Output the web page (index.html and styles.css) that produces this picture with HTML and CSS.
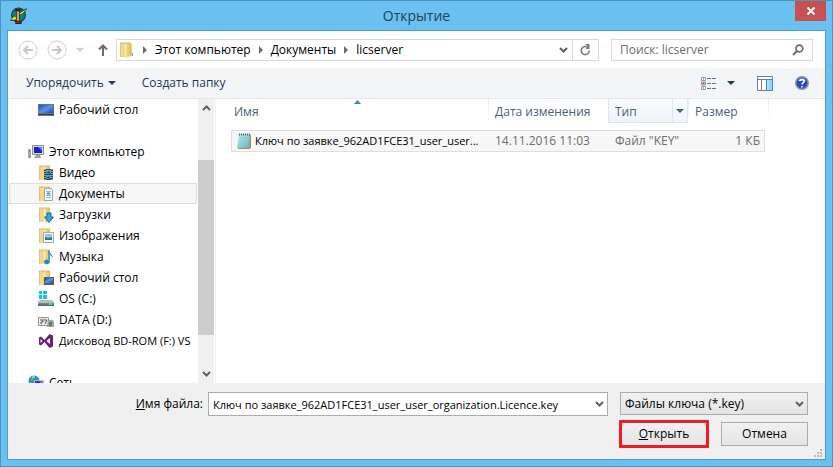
FILE: index.html
```html
<!DOCTYPE html>
<html lang="ru">
<head>
<meta charset="utf-8">
<title>Открытие</title>
<link rel="stylesheet" href="styles.css">
</head>
<body>
<svg class="defs" aria-hidden="true">
  <defs>
    <linearGradient id="gold" x1="0" x2="1"><stop offset="0" stop-color="#f7e39c"/><stop offset="1" stop-color="#dfbc58"/></linearGradient>
    <linearGradient id="screen" x1="0" y1="0" x2="1" y2="1"><stop offset="0" stop-color="#1d4fae"/><stop offset=".5" stop-color="#5c94ea"/><stop offset="1" stop-color="#1c49ad"/></linearGradient>
    <linearGradient id="pad" x1="0" x2="1" y2="1"><stop offset="0" stop-color="#c9eef5"/><stop offset="1" stop-color="#5fb0c6"/></linearGradient>
    <linearGradient id="metal" x2="0" y2="1"><stop offset="0" stop-color="#b9c0c4"/><stop offset="1" stop-color="#4c6068"/></linearGradient>
    <symbol id="folder" viewBox="0 0 16 16">
      <path d="M1 1h6v14H1z" fill="#f0d98c"/>
      <path d="M1.500 1v14" stroke="#dcc47c"/>
      <path d="M6 1h6v13l-5 2z" fill="url(#gold)"/>
      <path d="M6.500 2v13" stroke="#fff3c4"/>
      <path d="M1 1h11" stroke="#d9bc68"/>
    </symbol>
    <symbol id="chevron" viewBox="0 0 9 6"><path d="M1 1l3.500 3.500L8 1" fill="none" stroke="currentColor" stroke-width="2"/></symbol>
    <symbol id="caret" viewBox="0 0 8 4"><path d="M0 0h8L4 4z" fill="currentColor"/></symbol>
    <symbol id="step" viewBox="0 0 4 8"><path d="M0 0l4 4-4 4z" fill="currentColor"/></symbol>
  </defs>
</svg>
<div class="window">
  <header class="titlebar">
    <svg class="app-icon" viewBox="0 0 16 16" aria-hidden="true">
      <circle cx="8" cy="7.500" r="6.500" fill="#087f83" stroke="#123c3c"/>
      <path d="M0 13l3-4 3 1-1 3zM9 6l3-3 4-2-2 4-4 2z" fill="#222"/>
      <path d="M1 12l3-3 2 1-1 2zM9 6l3-2 3-2-2 3-3 2z" fill="#f4ee10"/>
      <path d="M5 2h5v2H9v9h2v3H5v-3h1V4H5z" fill="#3b1710"/>
      <path d="M7.500 4v9" stroke="#e1a052" stroke-width="2"/><path d="M6 14.500h4" stroke="#b52a20"/>
    </svg>
    <h1>Открытие</h1>
    <button class="close" aria-label="Закрыть"><svg width="8" height="8" viewBox="0 0 8 8"><path d="M.5 .5l7 7M7.500 .5l-7 7" stroke="#fff" stroke-width="2"/></svg></button>
  </header>
  <main class="dialog">
    <nav class="navbar">
      <button class="round" aria-label="Назад"><svg width="20" height="20" viewBox="0 0 20 20"><circle cx="10" cy="10" r="9" fill="none" stroke="#cdcdcd"/><path d="M15 10H6M10 6l-4 4 4 4" fill="none" stroke="#c8c8c8" stroke-width="2"/></svg></button>
      <button class="round" aria-label="Вперёд"><svg width="20" height="20" viewBox="0 0 20 20"><circle cx="10" cy="10" r="9" fill="none" stroke="#cdcdcd"/><path d="M5 10h9M10 6l4 4-4 4" fill="none" stroke="#c8c8c8" stroke-width="2"/></svg></button>
      <button class="recent" aria-label="Последние расположения"><svg width="8" height="4"><use href="#caret"/></svg></button>
      <button class="up" aria-label="Вверх"><svg width="10" height="12" viewBox="0 0 10 12"><path d="M5 12V2M1 5.500l4-4 4 4" fill="none" stroke="#6b6b6b" stroke-width="2"/></svg></button>
      <div class="address">
        <svg class="place" width="16" height="16" viewBox="0 0 16 16"><use href="#folder"/><path d="M12.500 2v12" stroke="#e8cd77"/><path d="M13.500 11v3" stroke="#69abd0"/></svg>
        <svg class="step" width="4" height="8"><use href="#step"/></svg>
        <a href="#">Этот компьютер</a>
        <svg class="step" width="4" height="8"><use href="#step"/></svg>
        <a href="#">Документы</a>
        <svg class="step" width="4" height="8"><use href="#step"/></svg>
        <a href="#">licserver</a>
        <button class="history" aria-label="Предыдущие расположения"><svg width="9" height="6"><use href="#chevron"/></svg></button>
        <button class="refresh" aria-label="Обновить"><svg width="11" height="12" viewBox="0 0 11 12"><path d="M6.500 2.800A4 4 0 1 0 9.200 6.500" fill="none" stroke="#7b7b7b" stroke-width="1.600"/><path d="M5.500 0v1.500h2L5.500 5h4V0z" fill="#7b7b7b"/></svg></button>
      </div>
      <div class="search">
        <input type="search" aria-label="Поиск" placeholder="Поиск: licserver">
        <svg width="12" height="12" viewBox="0 0 12 12"><circle cx="7.300" cy="4.500" r="3.400" fill="none" stroke="#6d6d6d" stroke-width="1.700"/><path d="M5 7l-4 4" stroke="#6d6d6d" stroke-width="2"/></svg>
      </div>
    </nav>
    <div class="toolbar">
      <button>Упорядочить<svg width="8" height="4"><use href="#caret"/></svg></button>
      <button>Создать папку</button>
      <span class="spacer"></span>
      <button class="view" aria-label="Вид">
        <svg width="16" height="13" viewBox="0 0 16 13"><path d="M.5 .5h4v3h-4zM.5 5h4v3h-4zM.5 9.500h4v3h-4z" fill="#fff" stroke="#8f9bad"/><path d="M2 2h1M2 11h1" stroke="#3b61a0"/><path d="M1.500 6.500h2" stroke="#e02a2a" stroke-width="2"/><path d="M6 1.500h4m1 0h4M6 6.500h4m1 0h4M6 11.500h4m1 0h4" stroke="#62738b"/></svg>
        <svg width="8" height="4"><use href="#caret"/></svg>
      </button>
      <button aria-label="Область просмотра"><svg width="16" height="15" viewBox="0 0 16 15"><path d="M.5 .5h15v14H.500z" fill="#fff" stroke="#747b84"/><path d="M1 3.500h14M4.500 4v10" stroke="#747b84"/><path d="M9.500 3.500h6v11h-6z" fill="#9bd0fb" stroke="#3290dc"/><path d="M11 5v8" stroke="#d7edff"/></svg></button>
      <button aria-label="Справка"><svg width="14" height="14" viewBox="0 0 14 14"><circle cx="7" cy="7" r="6.200" fill="#254abf" stroke="#8b929e" stroke-width="1.500"/><path d="M3 5a4.500 4 0 0 1 8 0" fill="#7fa3ee"/><path d="M4.700 5.200C5 2.700 9.300 2.800 9.200 5.200 9.100 6.700 7.100 6.500 7 8.500M7 10v1.500" fill="none" stroke="#fff" stroke-width="1.600"/></svg></button>
    </div>
    <div class="body">
      <aside class="tree">
        <ul>
          <li><svg class="ic" viewBox="0 0 16 16"><path d="M0 2h16v12H0z" fill="#6b7480"/><path d="M1 3h14v8H1z" fill="url(#screen)"/><path d="M0 12.500h16" stroke="#30405c"/></svg>Рабочий стол</li>
          <li class="blank"></li>
          <li class="root"><svg class="ic" viewBox="0 0 16 16"><path d="M0 5h3v9H0z" fill="#a3a7a5"/><path d="M1 7h1M1 12h1" stroke="#3b8c42"/><path d="M4.500 1.500h11v9h-11z" fill="#d7d9dc" stroke="#8d9196"/><path d="M6 3h8v6H6z" fill="#1720b8"/><path d="M10 3h4v4z" fill="#5b86f2"/><path d="M8 11h4l1 3H6z" fill="#9da1a6"/></svg>Этот компьютер</li>
          <li><svg class="ic" viewBox="0 0 16 16"><use href="#folder"/><path d="M6 4h9v11H6z" fill="#38454d"/><path d="M8 5h5v4H8zM8 10h5v4H8z" fill="#57a3cf"/><path d="M8 8l3-2 2 3zM8 13l3-2 2 3z" fill="#24546f"/><path d="M7 4v11M14 4v11" stroke="#e6ebee" stroke-dasharray="1 1"/></svg>Видео</li>
          <li class="selected"><svg class="ic" viewBox="0 0 16 16"><use href="#folder"/><path d="M6.500 2.500h7l1 2v10h-8z" fill="#f7f8f9" stroke="#a1a8ad"/><path d="M8 5.500h5M8 9.500h5M8 11.500h5" stroke="#9fb2c4"/><path d="M9 7.500h3" stroke="#3690df" stroke-width="2"/></svg>Документы</li>
          <li><svg class="ic" viewBox="0 0 16 16"><use href="#folder"/><path d="M9 6h4v4h2.500L11 15.500 6.500 10H9z" fill="#31a5e6" stroke="#1767a8"/></svg>Загрузки</li>
          <li><svg class="ic" viewBox="0 0 16 16"><use href="#folder"/><path d="M5.500 4.500h10v10h-10z" fill="#f7f7f7" stroke="#a5abad"/><path d="M7 6h7v6H7z" fill="#8fc8e8"/><path d="M7 9l3 1 4-1v3H7z" fill="#347d73"/></svg>Изображения</li>
          <li><svg class="ic" viewBox="0 0 16 16"><use href="#folder"/><path d="M10 3l1-2c0 4 5 4 3 9 0-3-1-4-2-4v6c0 4-6 4-6 1 0-2 2-3 4-2z" fill="#2788c3"/><path d="M11 4v8" stroke="#6fc3ec"/></svg>Музыка</li>
          <li><svg class="ic" viewBox="0 0 16 16"><use href="#folder"/><path d="M6 7h10v8H6z" fill="#555f70"/><path d="M7 8h8v5H7z" fill="url(#screen)"/></svg>Рабочий стол</li>
          <li><svg class="ic" viewBox="0 0 16 16"><path d="M1 0h3v3H1zM5 0h4v3H5zM1 4h3v4H1zM5 4h4v4H5z" fill="#0bc2f4"/><path d="M2 9h12l2 2v4H0v-4z" fill="url(#metal)"/><path d="M0 11h16" stroke="#d7dcde"/><path d="M11 13h3" stroke="#49e35c" stroke-width="2"/></svg>OS (C:)</li>
          <li><svg class="ic" viewBox="0 0 16 16"><path d="M.5 5.500h10v8H.500z" fill="#eceeea" stroke="#8e9790"/><path d="M2 8h3v2H3v2M6 8h3l-2 4" fill="none" stroke="#50564f"/><path d="M5 7h1M3 12h1" stroke="#d67838"/><path d="M10 8h5l1 2v5H9z" fill="#9da6a2"/><path d="M11 10h3v4h-3z" fill="#6b7671"/><path d="M14.500 12v2" stroke="#55cf56"/></svg>DATA (D:)</li>
          <li class="long"><svg class="ic" viewBox="0 0 16 16"><path d="M1 4.500l2-1L6.500 7l5-6L15 2.500v11L11.500 15l-5-6L3 12.500l-2-1z" fill="#68217a"/><path d="M2.500 6v4l2-2zM12 5L8.500 8l3.500 3z" fill="#fff"/></svg>Дисковод BD-ROM (F:) VS</li>
          <li class="blank"></li>
          <li class="root"><svg class="ic" viewBox="0 0 16 16"><circle cx="6" cy="6" r="5.500" fill="#3088cf"/><path d="M2 3l4-2 1 2-3 3zM1 7l3 0 2 3-2 1z" fill="#55bd4b"/><path d="M4 2h3" stroke="#b9e6fb"/><path d="M6.500 5.500h9v7h-9z" fill="#1d38c3" stroke="#b6bdc8"/><path d="M11 6h4v4z" fill="#5b82ee"/></svg>Сеть</li>
        </ul>
        <div class="scrollbar" aria-hidden="true">
          <svg class="turn" width="9" height="6"><use href="#chevron"/></svg>
          <div class="track"><div class="thumb"></div></div>
          <svg width="9" height="6"><use href="#chevron"/></svg>
        </div>
      </aside>
      <section class="files">
        <table>
          <colgroup><col class="c-name"><col class="c-date"><col class="c-type"><col class="c-size"></colgroup>
          <thead>
            <tr>
              <th>Имя<svg class="sort" width="7" height="4" viewBox="0 0 7 4"><path d="M0 4l3.500-4L7 4z" fill="#3f87ab"/></svg></th>
              <th>Дата изменения</th>
              <th class="hot">Тип<button aria-label="Фильтр по типу"><svg width="8" height="4"><use href="#caret"/></svg></button></th>
              <th>Размер</th>
            </tr>
          </thead>
          <tbody>
            <tr>
              <td><span class="file long"><svg class="ic" viewBox="0 0 16 16"><path d="M4 2h11v13l-2 1H2z" fill="#a58d5b"/><path d="M3 1h11l-1 14H1z" fill="url(#pad)"/><path d="M4 5h8M4 8h8M3 11h8" stroke="#8accda"/><path d="M3 1.500h12" stroke="#49666f" stroke-width="2" stroke-dasharray="1 1"/></svg>Ключ по заявке_962AD1FCE31_user_user...</span></td>
              <td>14.11.2016 11:03</td>
              <td>Файл "KEY"</td>
              <td class="num">1 КБ</td>
            </tr>
          </tbody>
        </table>
      </section>
    </div>
    <form class="footer">
      <label for="name"><u>И</u>мя файла:</label>
      <div class="combo">
        <input id="name" class="long" type="text" value="Ключ по заявке_962AD1FCE31_user_user_organization.Licence.key">
        <svg width="9" height="6"><use href="#chevron"/></svg>
      </div>
      <div class="combo type">
        <select aria-label="Тип файлов"><option>Файлы ключа (*.key)</option></select>
        <svg width="9" height="6"><use href="#chevron"/></svg>
      </div>
      <div class="actions">
        <button type="button" class="open"><span><u>О</u>ткрыть</span></button>
        <button type="button">Отмена</button>
      </div>
      <svg class="grip" width="8" height="8" viewBox="0 0 8 8"><path d="M6 0h2v2H6zM3 3h2v2H3zM6 3h2v2H6zM0 6h2v2H0zM3 6h2v2H3zM6 6h2v2H6z" fill="#bcbcbc"/></svg>
    </form>
  </main>
</div>
</body>
</html>
```

FILE: styles.css
```css
* { box-sizing: border-box; }
body {
  margin: 0;
  font: 12px/16px "Open Sans", "Noto Sans", sans-serif;
  color: #000;
}
button, input, select { font: inherit; color: inherit; }
button { padding: 0; border: 0; background: none; }
svg { display: block; flex: none; }
.defs { position: absolute; width: 0; height: 0; }
.ic { width: 16px; height: 16px; }
.long { font-size: 11px; }

.window {
  display: flex;
  flex-direction: column;
  height: 100vh;
  padding: 0 6px 6px;
  border: 1px solid #4e95bb;
  background: #69c0f1;
}
.titlebar {
  display: grid;
  grid-template-columns: 47px 1fr 47px;
  align-items: center;
  height: 29px;
}
.app-icon { width: 17px; height: 17px; margin-left: 3px; }
.titlebar h1 {
  margin: 0;
  font-size: 14px;
  line-height: 20px;
  font-weight: 400;
  text-align: center;
  color: #25404f;
}
.close {
  display: flex;
  align-items: center;
  justify-content: center;
  align-self: start;
  justify-self: end;
  width: 31px;
  height: 20px;
  background: #c75050;
}
.dialog {
  display: flex;
  flex: 1;
  flex-direction: column;
  min-height: 0;
  border: 1px solid #4f9dc7;
  background: #fff;
}

.navbar {
  display: flex;
  align-items: center;
  height: 37px;
  padding: 0 12px 0 10px;
}
.round { margin-right: 9px; }
.recent { color: #cfcfcf; margin-right: 14px; }
.up { margin-right: 8px; }
.address {
  display: flex;
  flex: 1;
  align-items: center;
  height: 22px;
  border: 1px solid #d9d9d9;
  padding-left: 2px;
}
.address a { color: #000; text-decoration: none; }
.address .step { color: #6d6d6d; margin: 0 8px; }
.history { margin-left: auto; padding: 0 4px; color: #606060; }
.refresh {
  display: flex;
  align-items: center;
  align-self: stretch;
  justify-content: center;
  width: 26px;
  border-left: 1px solid #d9d9d9;
}
.search {
  display: flex;
  align-items: center;
  width: 202px;
  height: 22px;
  margin-left: 12px;
  padding-right: 8px;
  border: 1px solid #d9d9d9;
}
.search input {
  flex: 1;
  min-width: 0;
  padding: 0 8px;
  border: 0;
  outline: 0;
  background: none;
}
.search input::placeholder { color: #6d6d6d; }

.toolbar {
  display: flex;
  align-items: center;
  height: 31px;
  padding: 0 16px 0 18px;
  gap: 22px;
  border-bottom: 1px solid #e4e7eb;
  background: #f4f5f7;
  color: #1e395b;
}
.toolbar button { display: flex; align-items: center; gap: 4px; }
.toolbar button:first-child { margin-right: 4px; }
.toolbar .view { gap: 10px; }
.spacer { flex: 1; }

.body { display: flex; flex: 1; min-height: 0; }
.tree {
  display: flex;
  width: 208px;
  overflow: hidden;
  border-right: 1px solid #f0f0f0;
}
.tree ul {
  flex: 1;
  min-width: 0;
  margin: 0;
  padding: 0 1px;
  overflow: hidden;
  list-style: none;
  white-space: nowrap;
}
.tree li {
  display: flex;
  align-items: center;
  gap: 5px;
  height: 21px;
  padding-left: 28px;
  border: 1px solid transparent;
}
.tree .root { padding-left: 18px; }
.tree .selected { border-color: #dedede; background: #f7f7f7; }
.scrollbar {
  display: flex;
  flex-direction: column;
  align-items: center;
  width: 16px;
  margin-right: 1px;
  padding: 6px 0;
  background: #f0f0f0;
  color: #606060;
}
.turn { transform: rotate(180deg); }
.track { flex: 1; width: 100%; padding-top: 49px; }
.thumb { height: 83%; background: #cdcdcd; }

.files { flex: 1; min-width: 0; padding-left: 15px; overflow: hidden; }
table { width: 534px; table-layout: fixed; border-collapse: separate; border-spacing: 0; }
.c-name { width: 257px; }
.c-date { width: 120px; }
.c-type { width: 80px; }
.c-size { width: 77px; }
th {
  position: relative;
  height: 24px;
  padding: 2px 0 0 7px;
  font-weight: 400;
  text-align: left;
  color: #4c607a;
}
th:first-child { padding-left: 3px; }
th + th { background: linear-gradient(#dfe9f5, #fff) no-repeat left top / 1px 22px; }
th:last-child::after {
  position: absolute;
  top: 0;
  right: -4px;
  width: 1px;
  height: 22px;
  background: linear-gradient(#dfe9f5, #fff);
  content: "";
}
th.hot { background: linear-gradient(#fafcfe, #eff4fa); border: 1px solid #dce7f3; border-top: 0; padding-left: 6px; }
.hot button {
  position: absolute;
  top: 0;
  right: 0;
  bottom: 0;
  padding: 0 3px;
  border-left: 1px solid #dce7f3;
}
.sort { position: absolute; top: 1px; left: 48%; }
tbody::before { display: block; height: 7px; content: ""; }
td {
  height: 22px;
  padding: 0 4px 0 7px;
  border: solid #dedede;
  border-width: 1px 0;
  background: #f7f7f7;
  color: #6d6d6d;
  white-space: nowrap;
}
td:first-child { padding-left: 4px; border-left-width: 1px; color: #000; }
td:last-child { border-right-width: 1px; }
.num { text-align: right; }
.file { display: flex; align-items: center; gap: 3px; }

.footer {
  position: relative;
  display: grid;
  grid-template-columns: 195px 1fr 188px;
  align-content: start;
  gap: 4px 0;
  height: 76px;
  padding: 9px 17px 0 0;
  background: #f0f0f0;
}
.footer label { align-self: center; text-align: right; }
.combo { position: relative; height: 24px; margin-left: 5px; }
.combo input, .combo select {
  width: 100%;
  height: 24px;
  padding: 0 20px 0 4px;
  border: 1px solid #abadb3;
  border-radius: 0;
  background: #fff;
}
.combo svg { position: absolute; top: 9px; right: 4px; color: #606060; pointer-events: none; }
.combo.type { margin-left: 0; }
.combo.type select {
  appearance: none;
  height: 23px;
  border-color: #acacac;
  background: linear-gradient(#f0f0f0, #e5e5e5);
}
.combo:not(.type) { margin-right: 12px; }
.actions {
  display: flex;
  grid-column: 3;
  align-items: center;
  gap: 12px;
  margin-left: -1px;
}
.actions button {
  flex: 1;
  height: 24px;
  border: 1px solid #acacac;
  background: linear-gradient(#f0f0f0, #e5e5e5);
}
.actions .open { flex: 0 0 90px; height: 28px; border: 3px solid #ee1c25; }
.grip { position: absolute; right: 3px; bottom: 2px; }
```
